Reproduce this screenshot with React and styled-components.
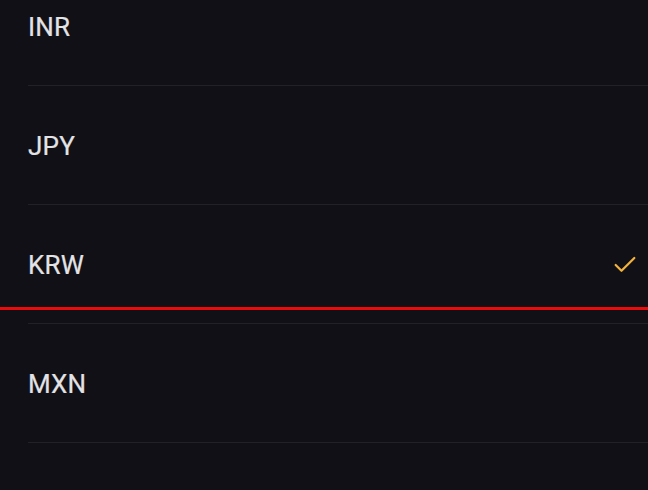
import React from "react";
import styled, { createGlobalStyle } from "styled-components";

const Global = createGlobalStyle`
  html, body { margin: 0; padding: 0; background: #111016; }
  body { overflow: hidden; }
`;

const Screen = styled.div`
  width: 648px;
  height: 490px;
  overflow: hidden;
  background: #111016;
  font-family: Roboto, "Liberation Sans", sans-serif;
`;

const List = styled.ul`
  position: relative;
  list-style: none;
  margin: -33px 0 0 0;
  padding: 0;
`;

const Row = styled.li`
  position: relative;
  height: 119px;
  display: flex;
  align-items: stretch;
`;

const RowInner = styled.div`
  flex: 1;
  margin-left: 28px;
  padding-right: 9px;
  border-bottom: 1px solid #222127;
  display: flex;
  align-items: center;
  justify-content: space-between;
  padding-top: 2px;
`;

const Code = styled.span`
  color: #e3e3e6;
  font-size: 26px;
  font-weight: 400;
  letter-spacing: 0.2px;
  -webkit-text-stroke: 0.2px #e3e3e6;
`;

const Indicator = styled.div`
  position: absolute;
  left: 0;
  right: 0;
  bottom: 14px;
  height: 3px;
  background: #e80c0c;
`;

const Check = () => (
  <svg width="28" height="28" viewBox="0 0 24 24" fill="none" stroke="#f2b33d" strokeWidth="1.9" strokeLinecap="round" strokeLinejoin="round">
    <path d="M20 6 9 17l-5-5" />
  </svg>
);

const items = [
  { code: "INR" },
  { code: "JPY" },
  { code: "KRW", selected: true },
  { code: "MXN" },
];

export default function App() {
  return (
    <Screen>
      <Global />
      <List>
        {items.map((it) => (
          <Row key={it.code}>
            <RowInner>
              <Code>{it.code}</Code>
              {it.selected && <Check />}
            </RowInner>
            {it.selected && <Indicator />}
          </Row>
        ))}
      </List>
    </Screen>
  );
}
